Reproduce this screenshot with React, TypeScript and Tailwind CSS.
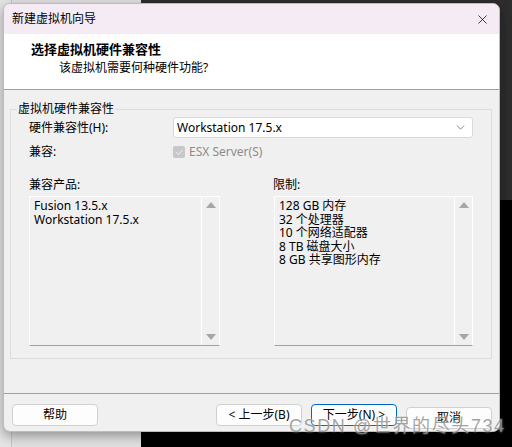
import { ChevronDown, Check, X } from 'lucide-react';

const cjk = '"Noto Sans", "Noto Sans CJK SC", sans-serif';

const products = ['Fusion 13.5.x', 'Workstation 17.5.x'];
const limits = ['128 GB 内存', '32 个处理器', '10 个网络适配器', '8 TB 磁盘大小', '8 GB 共享图形内存'];

function ListBox({ items, width }: { items: string[]; width: string }) {
  return (
    <div className={`${width} h-[150px] flex border border-white border-b-[#a0a0a0] bg-[#f0f0f0]`}>
      <div className="flex-1 pl-[4px] pt-[2px] text-[12px] leading-[13.5px] text-black">
        {items.map((it) => (
          <div key={it}>{it}</div>
        ))}
      </div>
      <div className="w-[18px] border-l border-white flex flex-col items-center justify-between py-[5px]">
        <div className="w-0 h-0 border-l-[5px] border-r-[5px] border-b-[6px] border-l-transparent border-r-transparent border-b-[#a6a6a6]" />
        <div className="w-0 h-0 border-l-[5px] border-r-[5px] border-t-[6px] border-l-transparent border-r-transparent border-t-[#a6a6a6]" />
      </div>
    </div>
  );
}

function Btn({ label, primary }: { label: string; primary?: boolean }) {
  return (
    <button
      className={`w-[86px] h-[22px] rounded-[4px] bg-[#fdfdfd] text-[12px] text-black border ${
        primary ? 'border-[#0067c0]' : 'border-[#d0d0d0]'
      }`}
    >
      {label}
    </button>
  );
}

export default function App() {
  return (
    <div className="relative w-[512px] h-[447px] overflow-hidden flex" style={{ fontFamily: cjk }}>
      <div className="w-[141px] bg-[#dcdcdc] flex">
        <div className="w-[12px] border-r border-[#c4c4c4] bg-[#e4e4e4]" />
        <div className="flex-1 bg-[#e0e0e0]" />
      </div>
      <div className="flex-1 flex flex-col">
        <div className="h-[200px] bg-[#2d2d2d]" />
        <div className="flex-1 bg-black" />
      </div>

      {/* dialog window */}
      <div className="absolute left-[3px] top-[3px] w-[497px] h-[429px] rounded-[7px] overflow-hidden flex flex-col bg-[#f0f0f0] border border-[#bdbdbd] shadow-[0_4px_12px_rgba(0,0,0,0.35)]">
        <div className="h-[30px] bg-[#f4ebf4] flex items-center justify-between pl-[8px] pr-[9px] text-[12px] text-black">
          <span>新建虚拟机向导</span>
          <X size={15} strokeWidth={1.2} />
        </div>

        <div className="h-[56px] bg-white border-b border-[#a0a0a0] pl-[27px] pt-[8px]">
          <div className="text-[13px] font-bold leading-[15px] text-black">选择虚拟机硬件兼容性</div>
          <div className="text-[12px] leading-[15px] mt-[3px] pl-[28px] text-black">该虚拟机需要何种硬件功能?</div>
        </div>

        <div className="flex-1 px-[6px] pt-[12px]">
          <fieldset className="border border-[#dcdcdc] w-[482px] px-[18px] pb-[12px]">
            <legend className="-ml-[12px] px-[1px] text-[12px] leading-[14px] text-black">虚拟机硬件兼容性</legend>
            <div className="flex items-center mt-[1px] text-[12px] text-black">
              <div className="w-[144px]">硬件兼容性(H):</div>
              <div className="w-[300px] h-[21px] bg-white border border-[#d9d9d9] rounded-[3px] flex items-center justify-between pl-[3px] pr-[5px]">
                <span>Workstation 17.5.x</span>
                <ChevronDown size={13} strokeWidth={1.3} className="text-[#555]" />
              </div>
            </div>
            <div className="flex items-center mt-[7px] text-[12px] h-[14px]">
              <div className="w-[144px] text-black">兼容:</div>
              <div className="w-[12px] h-[12px] rounded-[2px] bg-[#c8c8c8] flex items-center justify-center">
                <Check size={9} strokeWidth={2.5} className="text-[#f4f4f4]" />
              </div>
              <span className="ml-[4px] text-[#8c8c8c]">ESX Server(S)</span>
            </div>
            <div className="flex mt-[19px] text-[12px] text-black">
              <div className="w-[245px]">
                <div className="leading-[14px] mb-[4px]">兼容产品:</div>
                <ListBox items={products} width="w-[191px]" />
              </div>
              <div>
                <div className="leading-[14px] mb-[4px] -ml-[1px]">限制:</div>
                <ListBox items={limits} width="w-[199px]" />
              </div>
            </div>
          </fieldset>
        </div>

        <div className="h-[38px] border-t border-[#a0a0a0] flex items-start pt-[10px] pl-[8px] pr-[7px]">
          <Btn label="帮助" />
          <div className="flex-1" />
          <div className="flex gap-[9px]">
            <Btn label="< 上一步(B)" />
            <Btn label="下一步(N) >" primary />
          </div>
          <div className="ml-[9px]">
            <Btn label="取消" />
          </div>
        </div>
      </div>

      <div
        className="absolute left-[289px] top-[416px] text-[18px] leading-[20px] tracking-[1.6px] text-[#8a8a8a]/80 whitespace-nowrap"
        style={{ fontFamily: '"Liberation Sans", "Noto Sans CJK SC", sans-serif', textShadow: '0 0 2px rgba(255,255,255,0.7)' }}
      >
        CSDN @世界的尽头734
      </div>
    </div>
  );
}
